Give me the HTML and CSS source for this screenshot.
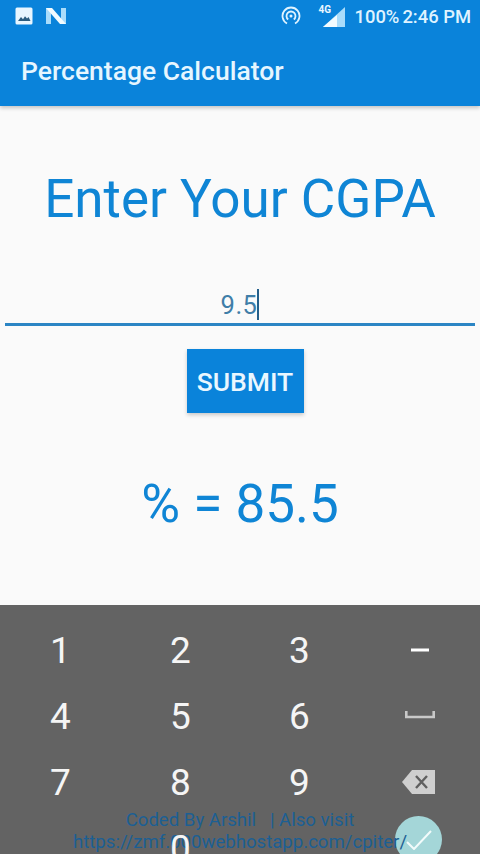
FILE: index.html
```html
<!DOCTYPE html>
<html lang="en">
<head>
<meta charset="utf-8">
<title>Percentage Calculator</title>
<link rel="stylesheet" href="styles.css">
</head>
<body>
<div class="screen">
  <header class="appbar">
    <div class="status">
      <div class="status-left">
        <svg class="ic-img" viewBox="0 0 18 18"><rect x="0.5" y="0.5" width="17" height="17" rx="1.5" fill="#e8f6ff"/><path d="M3 14l3-4 2 2.2 2-3 2 2.3 1.5-1.5L15.500 14z" fill="#2b5d80"/></svg>
        <svg class="ic-n" viewBox="0 0 20 16"><path d="M0 0h5v16H0z" fill="#a9dcfb"/><path d="M15 0h5v16h-5z" fill="#a9dcfb"/><path d="M0 0h6l14 16h-6z" fill="#f2fbff"/></svg>
      </div>
      <div class="status-right">
        <svg class="ic-hot" viewBox="0 0 20 20" fill="none" stroke="#dff3ff" stroke-width="1.800"><path d="M6 17.500A8.500 8.500 0 1 1 14 17.500"/><path d="M7.200 13.500a4.500 4.500 0 1 1 5.600 0"/><circle cx="10" cy="10" r="1.500" fill="#dff3ff" stroke="none"/></svg>
        <span class="net"><span class="net-label">4G</span><svg class="ic-sig" viewBox="0 0 22 20"><path d="M22 0v20H0z" fill="#a9dcfb"/><path d="M14 8v12H0z" fill="#f2fbff"/></svg></span>
        <span class="status-text">100%</span>
        <span class="status-text">2:46 PM</span>
      </div>
    </div>
    <div class="toolbar">Percentage Calculator</div>
  </header>

  <main class="content">
    <h1 class="title">Enter Your CGPA</h1>
    <div class="field"><span class="field-value">9.5</span><span class="caret"></span></div>
    <button class="submit" type="button">SUBMIT</button>
    <p class="result">% = 85.5</p>
  </main>

  <section class="keyboard">
    <span class="key">1</span><span class="key">2</span><span class="key">3</span>
    <span class="key"><svg class="ic-minus" viewBox="0 0 18 4"><rect width="18" height="3" y="0.500" fill="#fff"/></svg></span>
    <span class="key">4</span><span class="key">5</span><span class="key">6</span>
    <span class="key"><svg class="ic-space" viewBox="0 0 30 8" fill="none" stroke="#c9c9c9" stroke-width="2.600"><path d="M1.300 0v6h27.400V0"/></svg></span>
    <span class="key">7</span><span class="key">8</span><span class="key">9</span>
    <span class="key"><svg class="ic-back" viewBox="0 0 33 24"><path d="M10 0h23v24H10L0 12z" fill="#cfcfcf"/><path d="M14 6l11 12M25 6L14 18" stroke="#5f5f5f" stroke-width="2.400" fill="none"/></svg></span>
    <span class="key"></span><span class="key key-top">0</span><span class="key"></span><span class="key"></span>
  </section>

  <div class="fab"><svg class="ic-check" viewBox="0 0 26 20" fill="none" stroke="#f2fbfb" stroke-width="2"><path d="M1 12l7 7L25 1"/></svg></div>
  <div class="footer-note">Coded By Arshil &nbsp; | Also visit<br>https://zmf.000webhostapp.com/cpiter/</div>
</div>
</body>
</html>
```
FILE: styles.css
```css
* { box-sizing: border-box; }
html, body { margin: 0; padding: 0; }
body { width: 480px; height: 854px; overflow: hidden; font-family: Roboto, "Liberation Sans", sans-serif; background: #fafafa; }
.screen { position: relative; width: 480px; height: 854px; overflow: hidden; display: flex; flex-direction: column; }

.appbar { height: 106px; flex: none; background: #0a83da; color: #eaf7ff; box-shadow: 0 2px 4px rgba(0,0,0,.22); position: relative; z-index: 1; }
.status { height: 32px; display: flex; align-items: center; justify-content: space-between; padding: 0 9px 0 15px; }
.status-left { display: flex; align-items: center; gap: 13px; }
.ic-img { width: 18px; height: 18px; display: block; }
.ic-n { width: 20px; height: 16px; display: block; }
.status-right { display: flex; align-items: center; }
.ic-hot { width: 20px; height: 20px; display: block; margin-right: 19px; }
.net { position: relative; display: block; width: 24px; height: 20px; margin-right: 10px; }
.net-label { position: absolute; left: -2px; top: -2px; font-size: 10px; font-weight: 700; color: #eaf7ff; }
.ic-sig { position: absolute; left: 3px; top: 1px; width: 22px; height: 20px; display: block; }
.status-text { font-size: 18.400px; font-weight: 500; color: #dff3ff; margin-left: 3px; }
.net + .status-text { margin-left: 0; }
.toolbar { padding-left: 21px; height: 74px; line-height: 77px; font-size: 26.500px; font-weight: 500; color: #e6f6ff; }

.content { flex: 1; min-height: 0; display: flex; flex-direction: column; align-items: center; padding: 0 5px; }
.title { margin: 63px 0 0; font-size: 53px; line-height: 60px; font-weight: 400; color: #0f85d5; }
.field { align-self: stretch; margin-top: 51px; height: 46px; display: flex; justify-content: center; align-items: flex-end; border-bottom: 3px solid #2b85c4; padding-bottom: 3px; }
.field-value { font-size: 25.500px; line-height: 30px; letter-spacing: .5px; color: #3f7ea8; }
.caret { width: 2px; height: 31px; background: #245f8a; }
.submit { margin: 23px 0 0 10px; width: 117px; height: 64px; border: 0; padding: 0; background: #0a83da; color: #eaf7ff; font-family: inherit; font-size: 26.500px; font-weight: 500; box-shadow: 0 2px 4px rgba(0,0,0,.2); }
.result { margin: 61px 0 0; font-size: 53px; line-height: 60px; color: #0f85d5; }

.keyboard { height: 249px; flex: none; background: #636363; display: grid; grid-template-columns: 121px 119px 119px 121px; grid-template-rows: repeat(4, 66px); padding-top: 12px; color: #fff; }
.key { display: flex; align-items: center; justify-content: center; font-size: 37px; font-weight: 400; color: #f5f5f5; }
.key-top { position: relative; z-index: 2; }
.ic-minus { width: 18px; height: 4px; display: block; }
.ic-space { width: 30px; height: 8px; display: block; margin-bottom: 3px; }
.ic-back { width: 33px; height: 24px; display: block; margin-right: 2px; }

.footer-note { position: absolute; left: 0; right: 0; top: 809px; text-align: center; font-size: 18.600px; line-height: 22px; color: #1c5f93; white-space: nowrap; z-index: 1; }
.fab { position: absolute; left: 395px; top: 816px; width: 47px; height: 47px; border-radius: 50%; background: #a4d6d8; display: flex; align-items: center; justify-content: center; }
.ic-check { width: 26px; height: 20px; display: block; }
```
